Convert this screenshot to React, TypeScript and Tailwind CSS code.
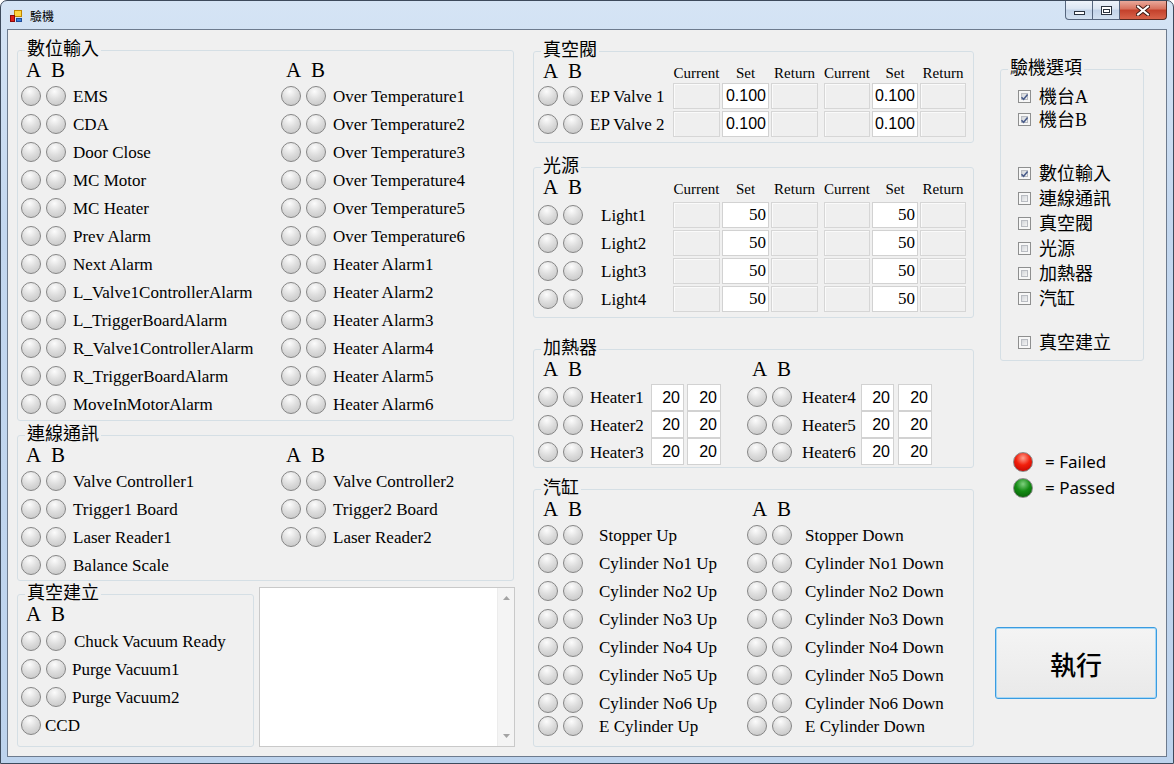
import { Fragment } from "react"
import type { ReactNode } from "react"

// font stacks
const serif = "font-['Liberation_Serif','Noto_Sans_CJK_TC',serif]"
const cjk = "font-['Noto_Sans_CJK_TC',sans-serif]"
const sans = "font-['Liberation_Sans',sans-serif]"

const DIGITAL_A = [
  "EMS",
  "CDA",
  "Door Close",
  "MC Motor",
  "MC Heater",
  "Prev Alarm",
  "Next Alarm",
  "L_Valve1ControllerAlarm",
  "L_TriggerBoardAlarm",
  "R_Valve1ControllerAlarm",
  "R_TriggerBoardAlarm",
  "MoveInMotorAlarm",
]
const DIGITAL_B = [
  "Over Temperature1",
  "Over Temperature2",
  "Over Temperature3",
  "Over Temperature4",
  "Over Temperature5",
  "Over Temperature6",
  "Heater Alarm1",
  "Heater Alarm2",
  "Heater Alarm3",
  "Heater Alarm4",
  "Heater Alarm5",
  "Heater Alarm6",
]
const COMM_A = ["Valve Controller1", "Trigger1 Board", "Laser Reader1", "Balance Scale"]
const COMM_B = ["Valve Controller2", "Trigger2 Board", "Laser Reader2", ""]
const CYL_UP = [
  "Stopper Up",
  "Cylinder No1 Up",
  "Cylinder No2 Up",
  "Cylinder No3 Up",
  "Cylinder No4 Up",
  "Cylinder No5 Up",
  "Cylinder No6 Up",
  "E Cylinder Up",
]
const CYL_DOWN = [
  "Stopper Down",
  "Cylinder No1 Down",
  "Cylinder No2 Down",
  "Cylinder No3 Down",
  "Cylinder No4 Down",
  "Cylinder No5 Down",
  "Cylinder No6 Down",
  "E Cylinder Down",
]
const CYL_H = ["h-[28px]", "h-[28px]", "h-[28px]", "h-[28px]", "h-[28px]", "h-[28px]", "h-[27px]", "h-[20px]"]

function Led({ tone = "off", className = "" }: { tone?: "off" | "red" | "green"; className?: string }) {
  const fill =
    tone === "red"
      ? "bg-[radial-gradient(circle_at_50%_28%,#ffa08f_0%,#f2200c_45%,#b80000_100%)] border-[#8a8a8a]"
      : tone === "green"
        ? "bg-[radial-gradient(circle_at_50%_28%,#7fd07f_0%,#148c14_45%,#035503_100%)] border-[#8a8a8a]"
        : "bg-[radial-gradient(circle_at_42%_25%,#fcfcfc_0%,#dedede_45%,#c0c0c0_100%)] border-[#868686]"
  return <div className={`h-[20px] w-[20px] shrink-0 rounded-full border ${fill} ${className}`} />
}

function Group({ title, className = "", children }: { title: string; className?: string; children?: ReactNode }) {
  return (
    <fieldset className={`shrink-0 rounded-[3px] border border-[#d5dfe5] ${className}`}>
      <legend className={`ml-[7px] h-[20px] px-[2px] pb-[6px] text-[18px] leading-[14px] text-black ${cjk}`}>
        {title}
      </legend>
      {children}
    </fieldset>
  )
}

function AB({ className = "" }: { className?: string }) {
  return (
    <div className={`flex shrink-0 text-[21px] leading-[21px] text-black ${serif} ${className}`}>
      <span className="w-[30px] pl-[5px]">A</span>
      <span>B</span>
    </div>
  )
}

function LedRow({ label, h = "h-[28px]", gap = "ml-[7px]" }: { label: string; h?: string; gap?: string }) {
  if (!label) return <div className={h} />
  return (
    <div className={`flex items-center ${h}`}>
      <Led />
      <Led className="ml-[5px]" />
      <span className={`${gap} whitespace-nowrap pt-[2px] text-[17px] text-black ${serif}`}>{label}</span>
    </div>
  )
}

function Box({ w, value, white, font }: { w: string; value?: string; white?: boolean; font?: string }) {
  return (
    <div
      className={`h-[26px] shrink-0 border pr-[2px] text-right leading-[24px] text-black ${w} ${
        white ? "border-[#d2d2d2] bg-white" : "border-[#d6d6d6] bg-[#efefef] shadow-[inset_1px_1px_0_#fafafa]"
      } ${font ?? ""}`}
    >
      {value}
    </div>
  )
}

function ColumnHeads() {
  const heads = ["Current", "Set", "Return"]
  return (
    <>
      {heads.map((h) => (
        <span key={"a" + h} className="mr-[2px] w-[47px] text-center text-[15px] whitespace-nowrap">
          {h}
        </span>
      ))}
      <span className="w-[4px]" />
      {heads.map((h) => (
        <span key={"b" + h} className="mr-[2px] w-[46px] text-center text-[15px] whitespace-nowrap">
          {h}
        </span>
      ))}
    </>
  )
}

function ValueRow({ label, pad, value, font }: { label: string; pad: string; value: string; font: string }) {
  return (
    <div className="flex h-[26px] items-center">
      <Led />
      <Led className="ml-[5px]" />
      <span className={`ml-[7px] w-[83px] whitespace-nowrap pt-[2px] text-[17px] text-black ${serif} ${pad}`}>{label}</span>
      <Box w="w-[47px]" />
      <div className="w-[2px]" />
      <Box w="w-[47px]" white value={value} font={font} />
      <div className="w-[2px]" />
      <Box w="w-[47px]" />
      <div className="w-[6px]" />
      <Box w="w-[46px]" />
      <div className="w-[2px]" />
      <Box w="w-[46px]" white value={value} font={font} />
      <div className="w-[2px]" />
      <Box w="w-[46px]" />
    </div>
  )
}

function HeaterRow({ label, right, h }: { label: string; right?: boolean; h: string }) {
  const num = `text-[16px] ${sans}`
  return (
    <div className={`flex items-center ${h} ${right ? "" : "w-[209px]"}`}>
      <Led />
      <Led className="ml-[5px]" />
      <span
        className={`${right ? "ml-[10px] w-[59px]" : "ml-[7px] w-[61px]"} whitespace-nowrap pt-[2px] text-[17px] text-black ${serif}`}
      >
        {label}
      </span>
      <div className={`h-[27px] w-[33px] border border-[#d2d2d2] bg-white pr-[3px] text-right leading-[25px] ${num}`}>20</div>
      <div
        className={`${right ? "ml-[4px]" : "ml-[3px]"} h-[27px] w-[34px] border border-[#d2d2d2] bg-white pr-[3px] text-right leading-[25px] ${num}`}
      >
        20
      </div>
    </div>
  )
}

function Check({ checked }: { checked?: boolean }) {
  return (
    <div className="h-[13px] w-[13px] shrink-0 border border-[#8e8f8f] bg-[#f7f7f7] p-[2px]">
      <div className="flex h-full w-full items-center justify-center border border-[#b9bcc2] bg-[linear-gradient(135deg,#d3d6da,#f4f4f4)]">
        {checked && (
          <svg width="9" height="8" viewBox="0 0 9 8" className="-m-[2px]">
            <path d="M1.5 4.2 L3.6 6.3 L7.6 1.4" fill="none" stroke="#4b5e8c" strokeWidth="1.6" />
          </svg>
        )}
      </div>
    </div>
  )
}

function Option({ label, checked, h }: { label: string; checked?: boolean; h: string }) {
  return (
    <div className={`flex items-center ${h}`}>
      <Check checked={checked} />
      <span className={`ml-[8px] whitespace-nowrap text-[18px] leading-[20px] text-black ${serif}`}>{label}</span>
    </div>
  )
}

function TitleBar() {
  return (
    <div className="flex h-[28px] shrink-0 items-start">
      <svg className="ml-[8px] mt-[8px]" width="14" height="14" viewBox="0 0 14 14">
        <rect x="0.5" y="0.5" width="13" height="13" fill="#d9dde3" opacity="0.5" />
        <rect x="5.5" y="1.5" width="7" height="6" fill="#ffd640" stroke="#c08600" />
        <rect x="1.5" y="6.5" width="4" height="6" fill="#e22018" stroke="#8c0a0a" />
        <rect x="7.5" y="9.5" width="5" height="3" fill="#3d80dc" stroke="#1f4d9a" />
      </svg>
      <span className={`ml-[7px] mt-[7px] text-[12px] leading-[16px] text-black ${cjk}`}>驗機</span>
      <div className="ml-auto mr-[6px] flex h-[19px]">
        <div className="flex w-[28px] items-end justify-center rounded-bl-[4px] border border-t-0 border-[#56667e] bg-[linear-gradient(180deg,#eef3fa_0%,#dbe5f2_45%,#c2d3e8_50%,#d3e1f1_100%)] pb-[4px]">
          <div className="h-[4px] w-[11px] border border-[#2b3440] bg-white" />
        </div>
        <div className="flex w-[27px] items-center justify-center border-b border-r border-[#56667e] bg-[linear-gradient(180deg,#eef3fa_0%,#dbe5f2_45%,#c2d3e8_50%,#d3e1f1_100%)]">
          <div className="h-[9px] w-[11px] border border-[#2b3440] bg-white p-[1px] pt-[2px]">
            <div className="h-full w-full border border-[#2b3440]" />
          </div>
        </div>
        <div className="flex w-[47px] items-center justify-center rounded-br-[4px] border-b border-r border-[#5a2a22] bg-[linear-gradient(180deg,#e9a99b_0%,#d7705c_45%,#c3402b_50%,#d8634a_100%)]">
          <svg width="14" height="11" viewBox="0 0 14 11">
            <path d="M2 1.5 L12 9.5 M12 1.5 L2 9.5" stroke="#3d1a14" strokeWidth="4" strokeLinecap="square" />
            <path d="M2 1.5 L12 9.5 M12 1.5 L2 9.5" stroke="#ffffff" strokeWidth="2" strokeLinecap="square" />
          </svg>
        </div>
      </div>
    </div>
  )
}

export default function App() {
  return (
    <div className="flex h-[764px] w-[1174px] flex-col overflow-hidden rounded-t-[7px] border border-[#3d4a5c] bg-[linear-gradient(180deg,#d5e4f5_0%,#c3d7ef_30%,#bdd3ed_100%)]">
      <TitleBar />
      <div className="mx-[6px] flex h-[728px] shrink-0 border border-[#6d7b8e] bg-[#f0f0f0] text-black">
        {/* left column */}
        <div className="ml-[9px] mt-[10px] flex w-[498px] shrink-0 flex-col">
          <Group title="數位輸入" className="h-[381px] w-[497px]">
            <div className="pl-[3px]">
              <div className="flex h-[22px]">
                <AB className="w-[260px]" />
                <AB />
              </div>
              <div className="grid grid-cols-[260px_1fr]">
                {DIGITAL_A.map((a, i) => (
                  <Fragment key={a}>
                    <LedRow label={a} />
                    <LedRow label={DIGITAL_B[i]} />
                  </Fragment>
                ))}
              </div>
            </div>
          </Group>
          <Group title="連線通訊" className="mt-[4px] h-[156px] w-[497px]">
            <div className="pl-[3px]">
              <div className="flex h-[22px]">
                <AB className="w-[260px]" />
                <AB />
              </div>
              <div className="grid grid-cols-[260px_1fr]">
                {COMM_A.map((a, i) => (
                  <Fragment key={a}>
                    <LedRow label={a} />
                    <LedRow label={COMM_B[i]} />
                  </Fragment>
                ))}
              </div>
            </div>
          </Group>
          <div className="mt-[3px] flex">
            <Group title="真空建立" className="h-[163px] w-[237px]">
              <div className="pl-[3px]">
                <AB className="h-[23px]" />
                <LedRow label="Chuck Vacuum Ready" gap="ml-[8px]" />
                <LedRow label="Purge Vacuum1" gap="ml-[6px]" />
                <LedRow label="Purge Vacuum2" gap="ml-[6px]" />
                <div className="flex h-[28px] items-center">
                  <Led />
                  <span className={`ml-[4px] pt-[2px] text-[17px] ${serif}`}>CCD</span>
                </div>
              </div>
            </Group>
            <div className="ml-[5px] mt-[3px] flex h-[160px] w-[256px] border border-[#c9c9c9] bg-white">
              <div className="flex-1" />
              <div className="flex w-[17px] flex-col items-center justify-between border-l border-[#ececec] bg-[#f4f4f4] py-[8px]">
                <svg width="7" height="4" viewBox="0 0 7 4">
                  <path d="M0 4 L3.5 0 L7 4 Z" fill="#a3a3a3" />
                </svg>
                <svg width="7" height="4" viewBox="0 0 7 4">
                  <path d="M0 0 L7 0 L3.5 4 Z" fill="#a3a3a3" />
                </svg>
              </div>
            </div>
          </div>
        </div>

        {/* middle column */}
        <div className={`ml-[18px] mt-[11px] flex w-[441px] shrink-0 flex-col ${serif}`}>
          <Group title="真空閥" className="h-[102px] w-[441px]">
            <div className="pl-[4px]">
              <div className="flex h-[22px] items-baseline">
                <AB className="w-[135px]" />
                <ColumnHeads />
              </div>
              <div className="flex flex-col gap-[2px]">
                <ValueRow label="EP Valve 1" pad="" value="0.100" font={`text-[16px] ${sans}`} />
                <ValueRow label="EP Valve 2" pad="" value="0.100" font={`text-[16px] ${sans}`} />
              </div>
            </div>
          </Group>
          <Group title="光源" className="mt-[14px] h-[161px] w-[441px]">
            <div className="pl-[4px]">
              <div className="flex h-[25px] items-baseline">
                <AB className="w-[135px]" />
                <ColumnHeads />
              </div>
              <div className="flex flex-col gap-[2px]">
                {["Light1", "Light2", "Light3", "Light4"].map((l) => (
                  <ValueRow key={l} label={l} pad="pl-[11px]" value="50" font={`text-[17px] ${serif}`} />
                ))}
              </div>
            </div>
          </Group>
          <Group title="加熱器" className="mt-[21px] h-[129px] w-[441px]">
            <div className="pl-[4px]">
              <div className="flex h-[24px]">
                <AB className="w-[209px]" />
                <AB />
              </div>
              {[1, 2, 3].map((n, i) => (
                <div key={n} className="flex">
                  <HeaterRow label={`Heater${n}`} h={i === 0 ? "h-[28px]" : "h-[27px]"} />
                  <HeaterRow label={`Heater${n + 3}`} right h={i === 0 ? "h-[28px]" : "h-[27px]"} />
                </div>
              ))}
            </div>
          </Group>
          <Group title="汽缸" className="mt-[11px] h-[268px] w-[441px]">
            <div className="pl-[4px]">
              <div className="flex h-[22px]">
                <AB className="w-[209px]" />
                <AB />
              </div>
              {CYL_UP.map((u, i) => (
                <div key={u} className="flex">
                  <div className="w-[209px]">
                    <LedRow label={u} h={CYL_H[i]} gap="ml-[16px]" />
                  </div>
                  <LedRow label={CYL_DOWN[i]} h={CYL_H[i]} gap="ml-[13px]" />
                </div>
              ))}
            </div>
          </Group>
        </div>

        {/* right column */}
        <div className="ml-[21px] flex w-[162px] shrink-0 flex-col">
          <Group title="驗機選項" className="ml-[5px] mt-[29px] h-[302px] w-[144px]">
            <div className="pl-[17px] pt-[6px]">
              <Option label="機台A" checked h="h-[23px]" />
              <Option label="機台B" checked h="h-[23px]" />
              <div className="h-[30px]" />
              <Option label="數位輸入" checked h="h-[25px]" />
              <Option label="連線通訊" h="h-[25px]" />
              <Option label="真空閥" h="h-[25px]" />
              <Option label="光源" h="h-[25px]" />
              <Option label="加熱器" h="h-[25px]" />
              <Option label="汽缸" h="h-[25px]" />
              <div className="h-[19px]" />
              <Option label="真空建立" h="h-[25px]" />
            </div>
          </Group>
          <div className="ml-[18px] mt-[91px] flex h-[20px] items-center">
            <Led tone="red" />
            <span className="ml-[12px] font-['Noto_Sans',sans-serif] text-[17px] leading-[20px]">= Failed</span>
          </div>
          <div className="ml-[18px] mt-[6px] flex h-[20px] items-center">
            <Led tone="green" />
            <span className="ml-[12px] font-['Noto_Sans',sans-serif] text-[17px] leading-[20px]">= Passed</span>
          </div>
          <div
            className={`mt-[129px] flex h-[72px] w-[162px] items-center justify-center rounded-[3px] border border-[#3a9be0] bg-[linear-gradient(180deg,#f4f4f4,#e9e9e9)] text-[26px] font-medium shadow-[inset_0_0_0_1px_#a6d8f6] ${cjk}`}
          >
            執行
          </div>
        </div>
      </div>
    </div>
  )
}
